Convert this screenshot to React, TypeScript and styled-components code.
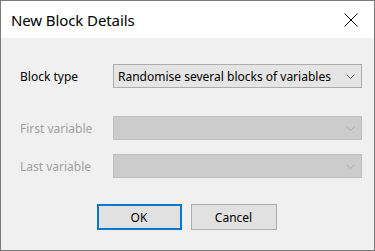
import styled, { createGlobalStyle } from "styled-components";

const GlobalStyle = createGlobalStyle`
  html, body {
    margin: 0;
    padding: 0;
    background: #f0f0f0;
  }
  body {
    font-family: "Noto Sans", "Open Sans", sans-serif;
  }
`;

const Window = styled.div`
  width: 375px;
  height: 251px;
  box-sizing: border-box;
  border: 1px solid #7a7a7a;
  background: #f0f0f0;
  display: flex;
  flex-direction: column;
`;

const TitleBar = styled.div`
  height: 37px;
  background: #ffffff;
  display: flex;
  align-items: center;
  justify-content: space-between;
  padding: 0 0 0 10px;
`;

const Title = styled.h1`
  margin: 0;
  font-size: 15px;
  font-weight: 400;
  color: #000;
  letter-spacing: -0.1px;
`;

const CloseButton = styled.div`
  width: 46px;
  height: 37px;
  display: flex;
  align-items: center;
  justify-content: center;
`;

const Body = styled.div`
  flex: 1;
  display: flex;
  flex-direction: column;
  padding: 26px 12px 0 19px;
`;

const Row = styled.div<{ $gap: number }>`
  display: grid;
  grid-template-columns: 93px 249px;
  align-items: center;
  margin-bottom: ${(p) => p.$gap}px;
`;

const Label = styled.label<{ $disabled?: boolean }>`
  font-size: 12px;
  color: ${(p) => (p.$disabled ? "#a0a0a0" : "#000")};
`;

const Combo = styled.div<{ $disabled?: boolean }>`
  height: 24px;
  box-sizing: border-box;
  border: 1px solid ${(p) => (p.$disabled ? "#bfbfbf" : "#adadad")};
  background: ${(p) => (p.$disabled ? "#cccccc" : "#e5e5e5")};
  display: flex;
  align-items: center;
  justify-content: space-between;
  padding: 0 6px 0 4px;
  font-size: 12px;
  color: #000;
`;

const Footer = styled.div`
  display: flex;
  justify-content: center;
  gap: 9px;
  margin-top: 26px;
  padding-right: 9px;
`;

const Button = styled.button<{ $default?: boolean }>`
  width: ${(p) => (p.$default ? 85 : 86)}px;
  height: 26px;
  box-sizing: border-box;
  font-family: inherit;
  font-size: 12px;
  color: #000;
  background: #e1e1e1;
  border: ${(p) => (p.$default ? "2px solid #0078d7" : "1px solid #adadad")};
  padding: 0;
`;

function Chevron({ color }: { color: string }) {
  return (
    <svg width="9" height="5" viewBox="0 0 9 5">
      <path d="M0.5 0.5 L4.5 4.5 L8.5 0.5" fill="none" stroke={color} strokeWidth="1" />
    </svg>
  );
}

export default function App() {
  return (
    <>
      <GlobalStyle />
      <Window>
        <TitleBar>
          <Title>New Block Details</Title>
          <CloseButton>
            <svg width="14" height="14" viewBox="0 0 14 14">
              <path d="M0.5 0.5 L13.5 13.5 M13.5 0.5 L0.5 13.5" stroke="#000" strokeWidth="1" />
            </svg>
          </CloseButton>
        </TitleBar>
        <Body>
          <Row $gap={28}>
            <Label>Block type</Label>
            <Combo>
              <span>Randomise several blocks of variables</span>
              <Chevron color="#606060" />
            </Combo>
          </Row>
          <Row $gap={14}>
            <Label $disabled>First variable</Label>
            <Combo $disabled>
              <span />
              <Chevron color="#b0b0b0" />
            </Combo>
          </Row>
          <Row $gap={0}>
            <Label $disabled>Last variable</Label>
            <Combo $disabled>
              <span />
              <Chevron color="#b0b0b0" />
            </Combo>
          </Row>
          <Footer>
            <Button $default>OK</Button>
            <Button>Cancel</Button>
          </Footer>
        </Body>
      </Window>
    </>
  );
}
